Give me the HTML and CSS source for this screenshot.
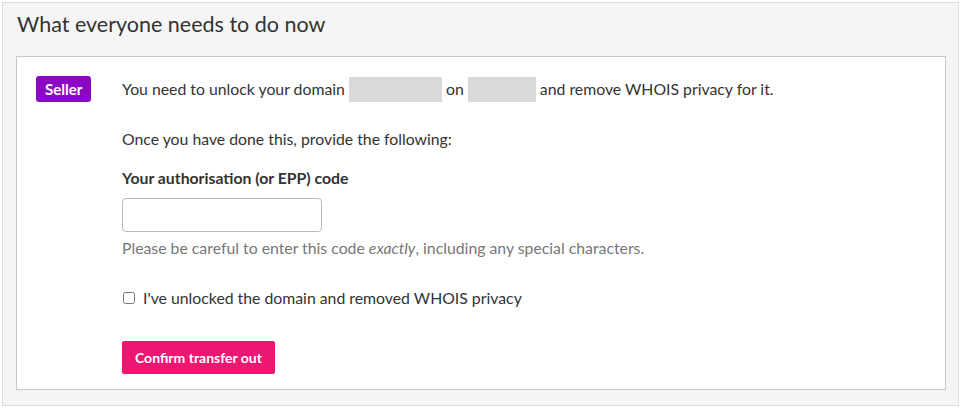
FILE: index.html
```html
<!DOCTYPE html>
<html>
<head>
<meta charset="utf-8">
<link rel="stylesheet" href="styles.css">
</head>
<body>
<section class="panel">
  <h2 class="panel-title">What everyone needs to do now</h2>
  <div class="task">
    <div class="task-role"><span class="badge">Seller</span></div>
    <div class="task-body">
      <p class="line">You need to unlock your domain <span class="redact redact-a"></span> on <span class="redact redact-b"></span> and remove WHOIS privacy for it.</p>
      <p class="line line-2">Once you have done this, provide the following:</p>
      <label class="field-label" for="epp">Your authorisation (or EPP) code</label>
      <input class="field-input" id="epp" type="text">
      <p class="hint">Please be careful to enter this code <em>exactly</em>, including any special characters.</p>
      <label class="check"><input type="checkbox" class="check-box"> I've unlocked the domain and removed WHOIS privacy</label>
      <button class="btn">Confirm transfer out</button>
    </div>
  </div>
</section>
</body>
</html>
```
FILE: styles.css
```css
* { box-sizing: border-box; }
html, body { margin: 0; padding: 0; background: #fff; }
body { font-family: Lato, "Noto Sans", sans-serif; color: #333; }
.panel {
  margin: 2px 2px 0 2px;
  height: 404px;
  border: 1px solid #dcdcdc;
  background: #f5f5f5;
  padding: 0 12px 0 13px;
}
.panel-title {
  margin: 0;
  font-weight: 400;
  font-size: 21.5px;
  line-height: 24px;
  padding: 9px 0 20px 1px;
  color: #333;
}
.task {
  background: #fff;
  border: 1px solid #c8c8c8;
  display: flex;
  height: 334px;
  padding: 19px 0 0 19px;
}
.task-role { width: 86px; flex: none; }
.badge {
  display: inline-block;
  background: #8a08c6;
  color: #fff;
  font-weight: 700;
  font-size: 15px;
  line-height: 26px;
  height: 26px;
  padding: 0 9px;
  border-radius: 3px;
}
.task-body { flex: 1; font-size: 15.8px; }
.line { margin: 0; line-height: 26px; display: flex; align-items: center; white-space: pre; }
.redact { display: inline-block; background: #d9d9d9; height: 25px; }
.redact-a { width: 93px; }
.redact-b { width: 68px; }
.line-2 { margin-top: 24px; }
.field-label { display: block; font-weight: 700; margin-top: 17px; line-height: 18px; }
.field-input {
  display: block;
  margin-top: 11px;
  width: 200px;
  height: 34px;
  border: 1px solid #b9b9b9;
  border-radius: 4px;
  font: inherit;
}
.hint { margin: 5px 0 0; color: #777; line-height: 22px; }
.check { display: flex; align-items: center; margin-top: 28px; line-height: 22px; }
.check-box { margin: 0 8px 0 1px; width: 12px; height: 12px; }
.btn {
  display: block;
  margin-top: 32px;
  background: #ed1670;
  color: #fff;
  border: 0;
  border-radius: 2px;
  height: 33px;
  padding: 0 13px;
  font-family: Lato, sans-serif;
  font-weight: 700;
  font-size: 14px;
}
```
